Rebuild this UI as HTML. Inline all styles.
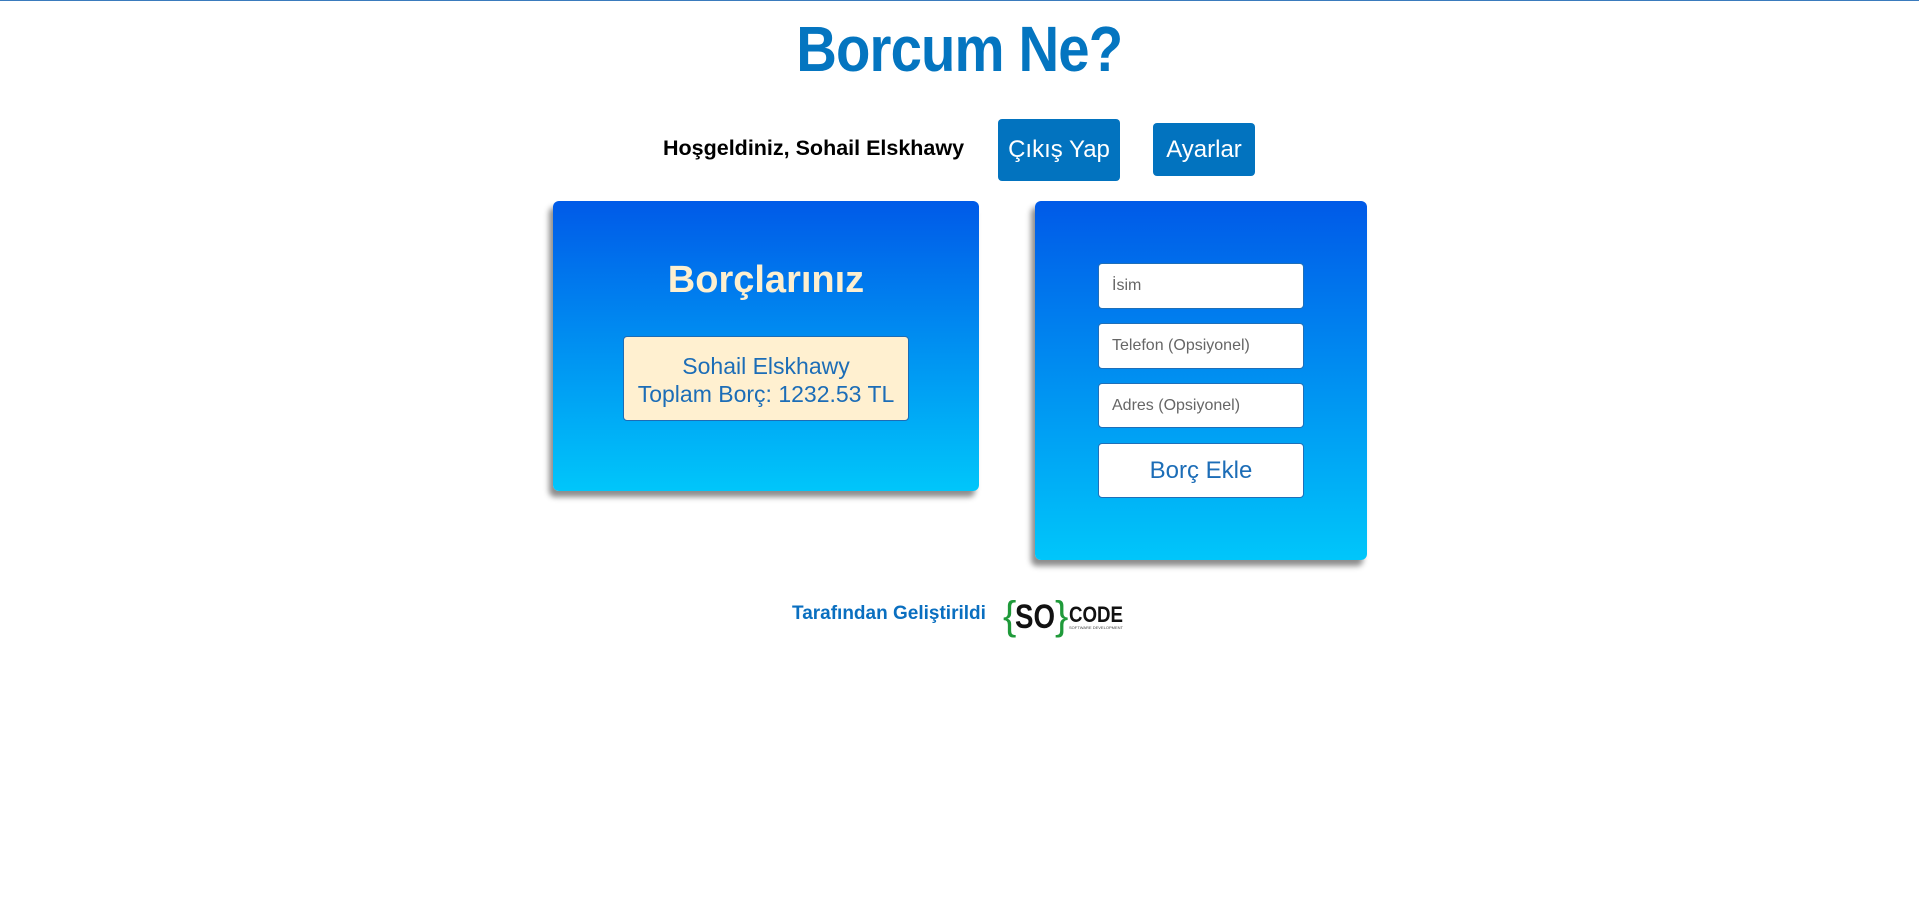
<!DOCTYPE html>
<html><head><meta charset="utf-8"><style>
*{box-sizing:border-box;margin:0;padding:0}
body{width:1919px;height:908px;background:#fff;font-family:"Liberation Sans",sans-serif;position:relative;overflow:hidden;border-top:1px solid #3a7bbd}
.abs{position:absolute}
h1{position:absolute;left:0;width:1919px;top:11px;text-align:center;color:#0475c0;font-size:64px;font-weight:bold;letter-spacing:-1px}
h1 span{display:inline-block;transform:scaleX(0.88)}
.btn{background:#0273bf;color:#fff;border-radius:4px;font-size:24px;display:flex;align-items:center;justify-content:center}
.card{background:linear-gradient(#005ae8,#00c6fa);border-radius:6px;box-shadow:-4px 6px 6px rgba(0,0,0,.45)}
.inp{position:absolute;left:1098px;width:206px;background:#fff;border:1px solid #1f6fb8;border-radius:4px;color:#666;font-size:16px;padding-left:13px;display:flex;align-items:center}
</style></head><body>
<h1><span>Borcum Ne?</span></h1>
<div class="abs" style="left:663px;top:135px;font-size:21.5px;font-weight:bold;color:#000">Hoşgeldiniz, Sohail Elskhawy</div>
<div class="abs btn" style="left:998px;top:118px;width:122px;height:62px">Çıkış Yap</div>
<div class="abs btn" style="left:1153px;top:122px;width:102px;height:53px">Ayarlar</div>
<div class="abs card" style="left:553px;top:200px;width:426px;height:290px"></div>
<div class="abs" style="left:553px;top:258px;width:426px;text-align:center;font-size:38px;font-weight:bold;color:#fdefcf">Borçlarınız</div>
<div class="abs" style="left:623px;top:335px;width:286px;height:85px;background:#fff0d0;border:1px solid #1d6cb5;border-radius:4px;color:#1c6db7;font-size:23px;text-align:center;line-height:28px;padding-top:15px">Sohail Elskhawy<br>Toplam Borç: 1232.53 TL</div>
<div class="abs card" style="left:1035px;top:200px;width:332px;height:359px"></div>
<div class="inp" style="top:262px;height:46px">İsim</div>
<div class="inp" style="top:322px;height:46px">Telefon (Opsiyonel)</div>
<div class="inp" style="top:382px;height:45px">Adres (Opsiyonel)</div>
<div class="inp" style="top:442px;height:55px;justify-content:center;padding:0;color:#1c6db7;font-size:24px">Borç Ekle</div>
<div class="abs" style="left:792px;top:602px;font-size:19px;font-weight:bold;color:#0a6fc0">Tarafından Geliştirildi</div>
<svg class="abs" style="left:1003px;top:590px" width="126" height="48" viewBox="0 0 126 48">
<text x="0" y="38" font-family="Liberation Sans" font-size="40" fill="#1f9a3a">{</text>
<text x="12" y="37" font-family="Liberation Sans" font-weight="bold" font-size="34" fill="#111" textLength="40" lengthAdjust="spacingAndGlyphs">SO</text>
<text x="52" y="38" font-family="Liberation Sans" font-size="40" fill="#1f9a3a">}</text>
<text x="66" y="31" font-family="Liberation Sans" font-weight="bold" font-size="22" fill="#111" textLength="54" lengthAdjust="spacingAndGlyphs">CODE</text>
<text x="66" y="38" font-family="Liberation Sans" font-size="4" fill="#444" textLength="54" lengthAdjust="spacingAndGlyphs">SOFTWARE DEVELOPMENT</text>
</svg>
</body></html>
